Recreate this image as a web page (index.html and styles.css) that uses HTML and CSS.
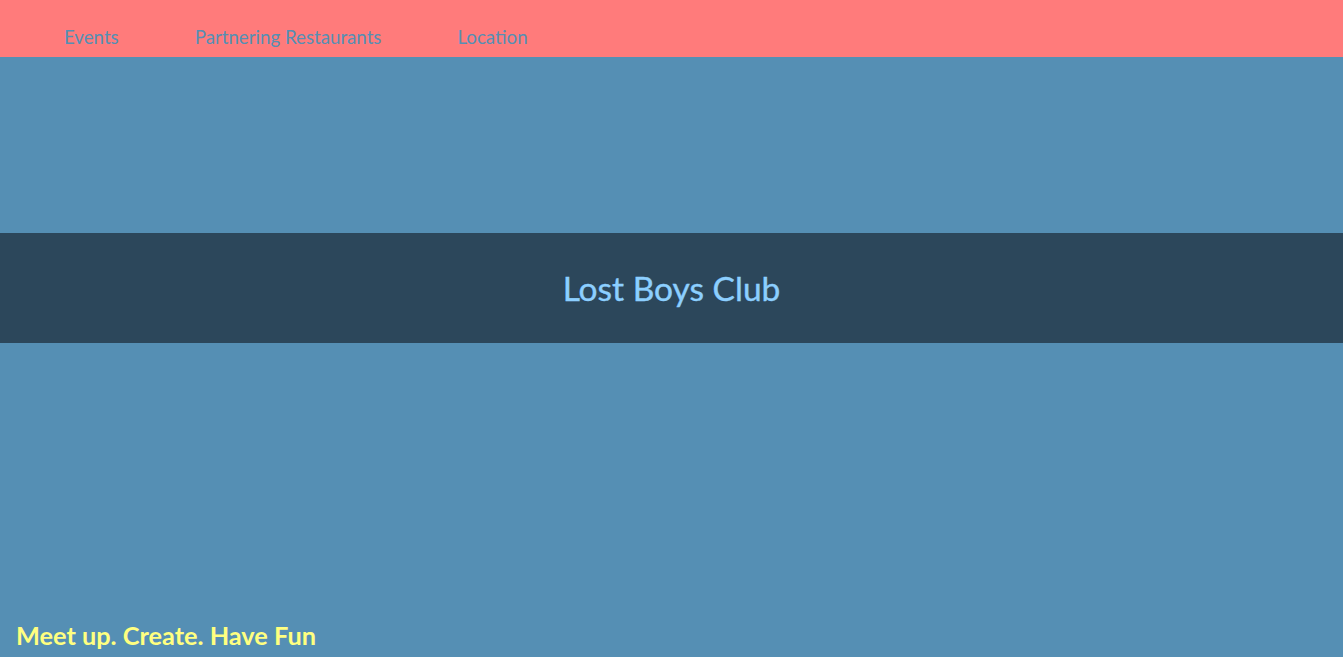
FILE: index.html
```html
<!DOCTYPE html>
<html lang="en">
<head>
<meta charset="utf-8">
<title>Lost Boys Club</title>
<link rel="stylesheet" href="styles.css">
</head>
<body>
<header class="topbar">
  <nav class="nav">
    <a class="nav-link" href="#">Events</a>
    <a class="nav-link" href="#">Partnering Restaurants</a>
    <a class="nav-link" href="#">Location</a>
  </nav>
</header>
<main class="hero">
  <div class="band">
    <h1 class="title">Lost Boys Club</h1>
  </div>
  <p class="tagline">Meet up. Create. Have Fun</p>
</main>
</body>
</html>
```
FILE: styles.css
```css
html, body {
  margin: 0;
  padding: 0;
  height: 100%;
}
body {
  font-family: Lato, "Open Sans", sans-serif;
  background: #558fb4;
  display: flex;
  flex-direction: column;
  overflow: hidden;
}
.topbar {
  background: #ff7b7b;
  height: 57px;
  display: flex;
  align-items: flex-end;
}
.nav {
  display: flex;
  gap: 76px;
  padding: 0 0 9px 64px;
}
.nav-link {
  color: #558fb4;
  text-decoration: none;
  font-size: 18.7px;
}
.hero {
  flex: 1;
  display: flex;
  flex-direction: column;
}
.band {
  margin-top: 176px;
  height: 110px;
  background: #2c475b;
  display: flex;
  align-items: center;
  justify-content: center;
}
.title {
  margin: 0;
  color: #8ccfff;
  font-size: 33.5px;
  font-weight: 400;
  -webkit-text-stroke: 0.4px #8ccfff;
}
.tagline {
  margin: auto 0 0 0;
  padding: 0 0 7px 16px;
  color: #ffff80;
  font-size: 25.3px;
  font-weight: 700;
}
```
